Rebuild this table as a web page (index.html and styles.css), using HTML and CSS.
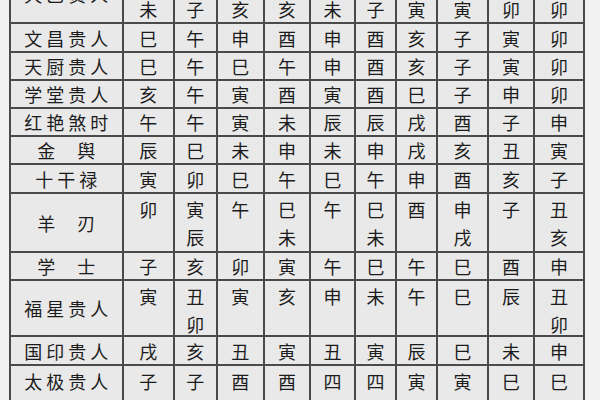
FILE: index.html
```html
<!DOCTYPE html>
<html lang="zh">
<head>
<meta charset="utf-8">
<title>神煞表</title>
<link rel="stylesheet" href="styles.css">
</head>
<body>
<div class="frame">
  <div class="grid">
    <div class="c lab">天乙贵人</div>
    <div class="c top">丑<br>未</div><div class="c top">申<br>子</div><div class="c top">酉<br>亥</div><div class="c top">酉<br>亥</div><div class="c top">丑<br>未</div><div class="c top">申<br>子</div><div class="c top">午<br>寅</div><div class="c top">午<br>寅</div><div class="c top">巳<br>卯</div><div class="c top">巳<br>卯</div>

    <div class="c lab">文昌贵人</div>
    <div class="c">巳</div><div class="c">午</div><div class="c">申</div><div class="c">酉</div><div class="c">申</div><div class="c">酉</div><div class="c">亥</div><div class="c">子</div><div class="c">寅</div><div class="c">卯</div>

    <div class="c lab">天厨贵人</div>
    <div class="c">巳</div><div class="c">午</div><div class="c">巳</div><div class="c">午</div><div class="c">申</div><div class="c">酉</div><div class="c">亥</div><div class="c">子</div><div class="c">寅</div><div class="c">卯</div>

    <div class="c lab">学堂贵人</div>
    <div class="c">亥</div><div class="c">午</div><div class="c">寅</div><div class="c">酉</div><div class="c">寅</div><div class="c">酉</div><div class="c">巳</div><div class="c">子</div><div class="c">申</div><div class="c">卯</div>

    <div class="c lab">红艳煞时</div>
    <div class="c">午</div><div class="c">午</div><div class="c">寅</div><div class="c">未</div><div class="c">辰</div><div class="c">辰</div><div class="c">戌</div><div class="c">酉</div><div class="c">子</div><div class="c">申</div>

    <div class="c lab sp">金 舆</div>
    <div class="c">辰</div><div class="c">巳</div><div class="c">未</div><div class="c">申</div><div class="c">未</div><div class="c">申</div><div class="c">戌</div><div class="c">亥</div><div class="c">丑</div><div class="c">寅</div>

    <div class="c lab">十干禄</div>
    <div class="c">寅</div><div class="c">卯</div><div class="c">巳</div><div class="c">午</div><div class="c">巳</div><div class="c">午</div><div class="c">申</div><div class="c">酉</div><div class="c">亥</div><div class="c">子</div>

    <div class="c lab sp">羊 刃</div>
    <div class="c top">卯</div><div class="c top">寅<br>辰</div><div class="c top">午</div><div class="c top">巳<br>未</div><div class="c top">午</div><div class="c top">巳<br>未</div><div class="c top">酉</div><div class="c top">申<br>戌</div><div class="c top">子</div><div class="c top">丑<br>亥</div>

    <div class="c lab sp">学 士</div>
    <div class="c">子</div><div class="c">亥</div><div class="c">卯</div><div class="c">寅</div><div class="c">午</div><div class="c">巳</div><div class="c">午</div><div class="c">巳</div><div class="c">酉</div><div class="c">申</div>

    <div class="c lab">福星贵人</div>
    <div class="c top">寅</div><div class="c top">丑<br>卯</div><div class="c top">寅</div><div class="c top">亥</div><div class="c top">申</div><div class="c top">未</div><div class="c top">午</div><div class="c top">巳</div><div class="c top">辰</div><div class="c top">丑<br>卯</div>

    <div class="c lab">国印贵人</div>
    <div class="c">戌</div><div class="c">亥</div><div class="c">丑</div><div class="c">寅</div><div class="c">丑</div><div class="c">寅</div><div class="c">辰</div><div class="c">巳</div><div class="c">未</div><div class="c">申</div>

    <div class="c lab top">太极贵人<br>查日时</div>
    <div class="c top">子<br>午</div><div class="c top">子<br>午</div><div class="c top">酉<br>卯</div><div class="c top">酉<br>卯</div><div class="c top">四<br>库</div><div class="c top">四<br>库</div><div class="c top">寅<br>亥</div><div class="c top">寅<br>亥</div><div class="c top">巳<br>申</div><div class="c top">巳<br>申</div>
  </div>
</div>
</body>
</html>
```

FILE: styles.css
```css
html, body {
  margin: 0;
  padding: 0;
  background: #f2f2f2;
  overflow: hidden;
  height: 400px;
}

.frame {
  padding-left: 9px;
  margin-top: -36px;
}

.grid {
  display: grid;
  width: max-content;
  grid-template-columns: 112.5px 51.5px 42.5px 47.5px 46px 45px 41px 41px 51px 46px 50px;
  grid-template-rows: 58px 29px 28px 28px 28px 28px 29px 59px 28px 56px 29px 57px;
  border-top: 2px solid #4a4a4a;
  border-left: 2px solid #4a4a4a;
  background: #e9e9e9;
  font-family: "Noto Sans CJK SC", "Noto Sans CJK JP", sans-serif;
  font-size: 18px;
  color: #1c1c1c;
}

.c {
  box-sizing: border-box;
  border-right: 2px solid #4a4a4a;
  border-bottom: 2px solid #4a4a4a;
  display: flex;
  flex-direction: column;
  align-items: center;
  justify-content: center;
  text-align: center;
  line-height: 26px;
}

.top {
  justify-content: flex-start;
  line-height: 28px;
  padding-top: 1px;
}

.lab {
  letter-spacing: 4px;
  padding-left: 4px;
}

.lab.top {
  letter-spacing: 4px;
}

.sp {
  word-spacing: 10px;
}
```
